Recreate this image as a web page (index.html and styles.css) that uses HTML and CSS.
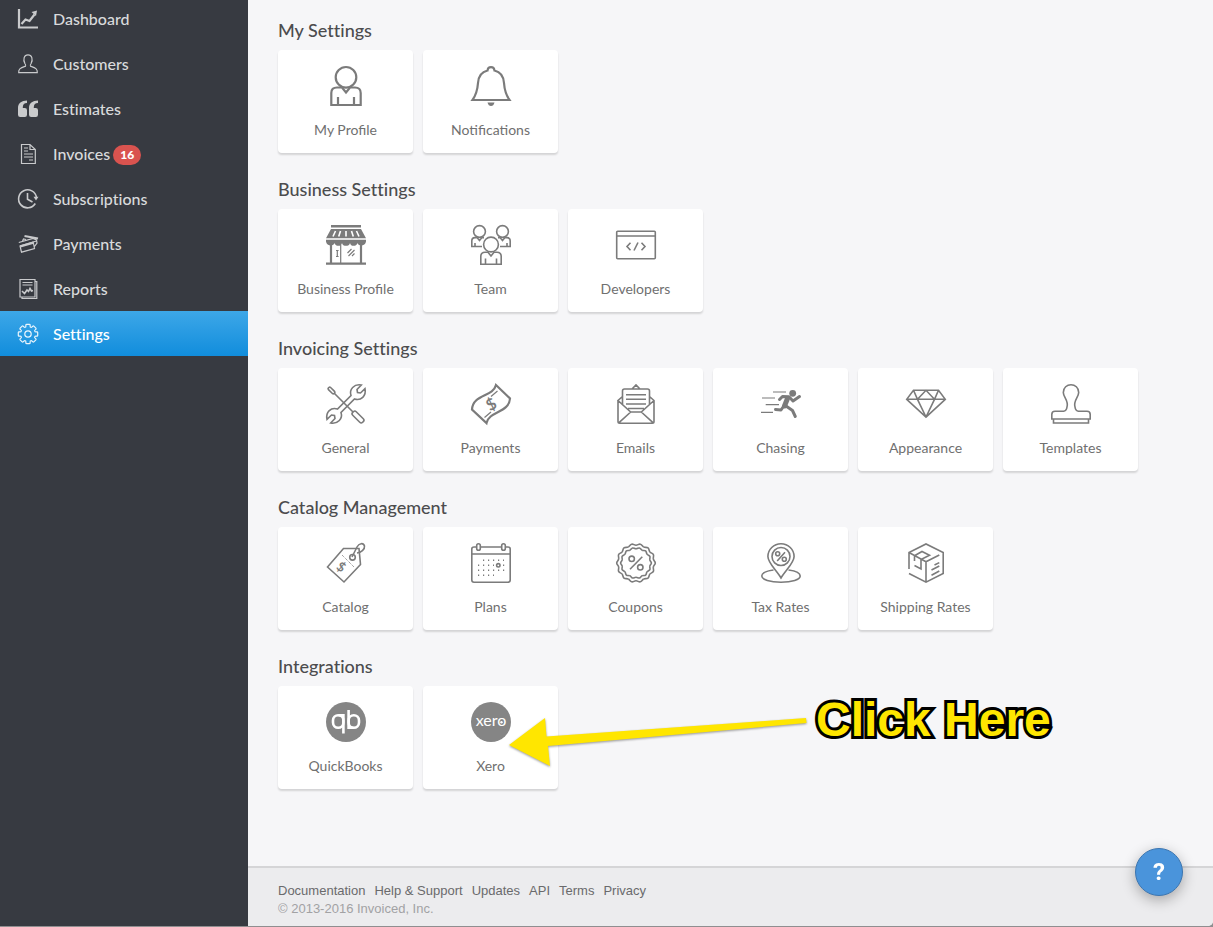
FILE: index.html
```html
<!DOCTYPE html>
<html lang="en">
<head>
<meta charset="utf-8">
<meta name="viewport" content="width=device-width, initial-scale=1">
<title>Settings</title>
<link rel="stylesheet" href="styles.css">
</head>
<body>
<div class="app">
  <nav class="sidebar" aria-label="Main">
    <a class="nav-item" href="#"><svg class="nav-icon" viewBox="0 0 20 20"><path class="w2" d="M1 0V18.500H20"/><path class="w2" d="M3.500 15L7.500 10.500L11.500 12L16.500 5.500"/><path class="solid" d="M13.500 3L19 1.500L18 7Z"/></svg>Dashboard</a>
    <a class="nav-item" href="#"><svg class="nav-icon" viewBox="0 0 20 20"><path d="M.7 18.700C.3 14.500 3 13.800 7.600 12.200C8.200 11.700 7.600 10.600 6.900 9.500C4.800 5.500 6 .8 10 .8S15.200 5.500 13.100 9.500C12.400 10.600 11.800 11.700 12.400 12.200C17 13.800 19.700 14.500 19.300 18.700Z"/></svg>Customers</a>
    <a class="nav-item" href="#"><svg class="nav-icon" viewBox="0 0 20 20"><path class="solid" d="M9 1.500V4C6.300 4 4.800 5.500 4.800 8.300V9H6.800Q9 9 9 11.200V15.800Q9 18 6.800 18H2.200Q0 18 0 15.800V8.800C0 4.500 3.500 1.500 9 1.500ZM20 1.500V4C17.300 4 15.800 5.500 15.800 8.300V9H17.800Q20 9 20 11.200V15.800Q20 18 17.800 18H13.200Q11 18 11 15.800V8.800C11 4.500 14.500 1.500 20 1.500Z"/></svg>Estimates</a>
    <a class="nav-item" href="#"><svg class="nav-icon" viewBox="0 0 20 20"><path d="M3.500 .5H12L17.300 5.500V19.500H3.500ZM12 .5V5.500H17.300M6 4H10M6 7H10M6 10H15M6 13H15M11 16H15"/></svg>Invoices<span class="badge">16</span></a>
    <a class="nav-item" href="#"><svg class="nav-icon" viewBox="0 0 20 20"><path class="w15" d="M18.500 8.500A9 9 0 1 0 17.300 14.500M9.500 4V10.200L14.500 13"/><path class="solid" d="M15.500 7.800H20.500L18 11.500Z"/></svg>Subscriptions</a>
    <a class="nav-item" href="#"><svg class="nav-icon" viewBox="0 0 20 20"><path class="w2" d="M6.500 2L20 4.500"/><path d="M.8 8.500L15 4.500L18.500 6L19 9L16.500 12.500M4.500 7L5.500 5L8 5.500M2 12L15.200 8L16.500 14.500L3.500 18.200ZM12 9L18.500 7"/><path class="w2" d="M2.300 12.400L15.500 8.600"/></svg>Payments</a>
    <a class="nav-item" href="#"><svg class="nav-icon" viewBox="0 0 20 20"><path d="M2 .5H17V18H2ZM17 2.500H18.800V19.500H4V18M4.500 3.500H14.500M4.500 6H14.500"/><path class="w15" d="M4 12L6.500 14.500L9 11L10.500 12.500L12 9.500L13.500 12L15 11.500"/></svg>Reports</a>
    <a class="nav-item active" href="#" aria-current="page"><svg class="nav-icon" viewBox="0 0 20 20"><defs><path id="tooth" d="M6.600 -2.730C7.300 -1.300 9.600 -3 9.700 -1.400V1.400C9.600 3 7.300 1.300 6.600 2.730"/></defs><g transform="translate(10 10)"><use href="#tooth"/><use href="#tooth" transform="rotate(45)"/><use href="#tooth" transform="rotate(90)"/><use href="#tooth" transform="rotate(135)"/><use href="#tooth" transform="rotate(180)"/><use href="#tooth" transform="rotate(225)"/><use href="#tooth" transform="rotate(270)"/><use href="#tooth" transform="rotate(315)"/><circle r="3.200"/></g></svg>Settings</a>
  </nav>

  <div class="page">
    <main class="content">
      <section class="group">
        <h2>My Settings</h2>
        <div class="cards">
          <a class="card" href="#"><svg class="icon w2" viewBox="0 0 40 40"><circle cx="20" cy="11.300" r="10.300"/><path d="M16 21.500H11Q5.300 21.500 5.300 27V39H34.700V27Q34.700 21.500 29 21.500H24L20 26.500ZM12 31V39M28 31V39"/></svg>My Profile</a>
          <a class="card" href="#"><svg class="icon w2" viewBox="0 0 40 40"><path d="M1.500 34C5 29 6.500 24 7 17C7.500 10 10 6 16.500 4.500C17 0 23 0 23.500 4.500C30 6 32.500 10 33 17C33.500 24 35 29 38.500 34Z"/><path class="solid" d="M16.500 36.500H23.500Q22.500 40 20 40T16.500 36.500Z"/></svg>Notifications</a>
        </div>
      </section>

      <section class="group">
        <h2>Business Settings</h2>
        <div class="cards">
          <a class="card" href="#"><svg class="icon" viewBox="0 0 40 40"><path class="solid" d="M5 0H35V2.500H5ZM5 4H35L40 13.300H0ZM0 14.700H40V16.500C39.500 21.500 32 21.500 31.500 18C30.500 21.800 24.500 21.800 24 18C23.500 21.800 16.500 21.800 16 18C15.500 21.800 9.500 21.800 8.500 18C8 21.500 .5 21.500 0 16.500Z"/><path class="white w15" d="M9.500 6L7 11.500M14.500 6L12.700 11.500M20 6V11.500M25.500 6L27.300 11.500M30.500 6L33 11.500"/><path class="w2" d="M5 19V38M35 19V38M0 38.700H40"/><path d="M14.700 20V38M11.300 25.500V31.500M10 25.500H12.600M10 31.500H12.600M21.500 28L25.500 24M22.500 31L28.500 25M26 31L28.500 28.500"/></svg>Business Profile</a>
          <a class="card" href="#"><svg class="icon w15" viewBox="0 0 40 40"><circle cx="8.500" cy="6.500" r="5.900"/><circle cx="31.500" cy="6.500" r="5.900"/><circle cx="20" cy="19.500" r="7.400"/><path d="M6 12.600H4Q.8 12.600 .8 16V21.500H11M6 12.600L8.500 15.500L11 12.600H13M4 18V21.500M34 12.600H36Q39.200 12.600 39.200 16V21.500H29M34 12.600L31.500 15.500L29 12.600H27M36 18V21.500M17 27.300H14Q9.800 27.300 9.800 31.500V39.200H30.200V31.500Q30.200 27.300 26 27.300H23L20 31ZM14.500 33.500V39M25.500 33.500V39"/></svg>Team</a>
          <a class="card" href="#"><svg class="icon" viewBox="0 0 40 40"><rect class="w15" x=".7" y="6.200" width="38.600" height="27.600" rx="1"/><path class="w15" d="M1 11H39M14.500 17.800L11 21.500L14.500 25.200M22 17.500L18 25.500M25.500 17.800L29 21.500L25.500 25.200"/></svg>Developers</a>
        </div>
      </section>

      <section class="group">
        <h2>Invoicing Settings</h2>
        <div class="cards">
          <a class="card" href="#"><svg class="icon w15" viewBox="0 0 40 40"><path d="M25 11.500C23 5.500 28 -.3 35.300 1L31 5.500L31.500 8.500L34.500 9L39 4.700C40.500 12 35 17 28.500 15L15 28.500C17 34.500 12 40.300 4.700 39L9 34.500L8.500 31.500L5.500 31L1 35.300C-.5 28 5 23 11.500 25Z"/><path d="M8.500 9.500L18 19M18 19L27 28"/><rect x="-1.500" y="-4" width="3" height="8" rx="1.200" transform="translate(5.500 6.500) rotate(-45)"/><rect x="-2.500" y="-7" width="5" height="14" rx="2" transform="translate(32 33) rotate(-45)"/></svg>General</a>
          <a class="card" href="#"><svg class="icon w2" viewBox="0 0 40 40"><path d="M25 1C22 13 2 10 1 25.500L15.500 39C18 27 38 29 39 14.500Z"/><path class="w1" d="M20 12.500L26.500 7M13.500 33.500L20 28"/><text class="glyph big" x="0" y="6" transform="translate(20 20) rotate(-30)">$</text></svg>Payments</a>
          <a class="card" href="#"><svg class="icon w15" viewBox="0 0 40 40"><path d="M6.500 20.500V7Q6.500 5 8.500 5H31.500Q33.500 5 33.500 7V20.500M16 5L20 1L24 5M2 16.500V37.500Q2 39.200 3.700 39.200H36.300Q38 39.200 38 37.500V16.500L33.500 12.500M6.500 12.500L2 16.500L14.700 28H25.300L38 16.500M14.700 28L3 38.700M25.300 28L37 38.700M12 24.500H28M10 10.700H30M10 15.300H30M10 20H30"/></svg>Emails</a>
          <a class="card" href="#"><svg class="icon" viewBox="0 0 40 40"><path d="M12 8H25M1 14H14M4.700 20.700H18M0 28.300H12"/><circle class="solid" cx="31.700" cy="9.300" r="3.400"/><path class="runner" d="M18.500 15.500L21.500 12.500L28 12.800L32 17L38.500 12.500M14.500 25.500L20 26L23.500 21M25 22L31.500 26.500L34.300 32.500"/><path class="torso" d="M26.500 14.500L23.500 22"/></svg>Chasing</a>
          <a class="card" href="#"><svg class="icon w15" viewBox="0 0 40 40"><path d="M7.500 6.300H32.500L39.300 15.300L20 33.200L.7 15.300ZM.7 15.300H39.300M7.500 6.300L11.500 15.300L20 33M32.500 6.300L28.500 15.300L20 33M11.500 15.300L20 6.300L28.500 15.300"/></svg>Appearance</a>
          <a class="card" href="#"><svg class="icon w15" viewBox="0 0 40 40"><path d="M16 23C18 17 12.300 13 12.300 8.500C12.300 3.500 16 .8 20 .8S27.700 3.500 27.700 8.500C27.700 13 22 17 24 23Q24.500 27 27.500 27.300H36Q39.200 27.300 39.200 30.500V35H.8V30.500Q.8 27.300 4 27.300H12.500Q15.500 27 16 23ZM2.500 35H37.500V39H2.500Z"/></svg>Templates</a>
        </div>
      </section>

      <section class="group">
        <h2>Catalog Management</h2>
        <div class="cards">
          <a class="card" href="#"><svg class="icon w15" viewBox="0 0 40 40"><path d="M1.500 24L17.500 5.500H33L34.500 21.500L18 39Z"/><circle cx="26.500" cy="14.300" r="2.800"/><path d="M26 14L31 4C33 0 37.500 -.5 38.500 3C39 6.500 35 9.500 31 10"/><path class="dotted" d="M16 12L28 24"/><text class="glyph" x="0" y="4" transform="translate(15 24.500) rotate(35)">$</text></svg>Catalog</a>
          <a class="card" href="#"><svg class="icon w15" viewBox="0 0 40 40"><path d="M5.500 4H3Q.8 4 .8 6V37Q.8 39.200 3 39.200H37Q39.200 39.200 39.200 37V6Q39.200 4 37 4H34.500M9.500 4H30.500M1 11H39"/><rect x="5.700" y=".7" width="3.600" height="6.600" rx="1.800"/><rect x="30.700" y=".7" width="3.600" height="6.600" rx="1.800"/><path class="dots" d="M12 17.300H33"/><path class="dots" d="M7 22.300H23M32 22.300H33.200"/><path class="dots" d="M7 27.300H33.200"/><path class="dots" d="M7 32.300H23"/><circle cx="27.300" cy="22.300" r="1.700"/></svg>Plans</a>
          <a class="card" href="#"><svg class="icon w15" viewBox="0 0 40 40"><defs><g id="lobe"><path d="M17.350 -3.960C17.700 -2.300 19.300 -1.600 19.300 0C19.300 1.600 17.700 2.300 17.350 3.960"/><path d="M13.840 -3.160C14.100 -1.800 15.400 -1.200 15.400 0C15.400 1.200 14.100 1.800 13.840 3.160"/></g><g id="half"><use href="#lobe"/><use href="#lobe" transform="rotate(25.714)"/><use href="#lobe" transform="rotate(51.429)"/><use href="#lobe" transform="rotate(77.143)"/><use href="#lobe" transform="rotate(102.857)"/><use href="#lobe" transform="rotate(128.571)"/><use href="#lobe" transform="rotate(154.286)"/></g></defs><g transform="translate(20 20)"><use href="#half"/><use href="#half" transform="rotate(180)"/></g><circle cx="15.700" cy="15.800" r="2.700"/><circle cx="24.300" cy="24.300" r="2.700"/><path d="M26.300 13.800L14 26.300"/></svg>Coupons</a>
          <a class="card" href="#"><svg class="icon w15" viewBox="0 0 40 40"><path d="M20 35C16 28 6.900 20 6.900 13.500A13.100 12.800 0 0 1 33.100 13.500C33.100 20 24 28 20 35Z"/><circle cx="20" cy="13.500" r="9"/><circle cx="16.700" cy="10.700" r="2"/><circle cx="23.300" cy="16.300" r="2"/><path d="M24 9.300L16.200 18M12.500 27C5 28 .8 30.300 .8 33C.8 36.600 9 39.200 20 39.200S39.200 36.600 39.200 33C39.200 30.300 35 28 27.500 27"/></svg>Tax Rates</a>
          <a class="card" href="#"><svg class="icon w15" viewBox="0 0 40 40"><path d="M3 26V9.500L20 1L37.200 9.500V30.500L20 39.200L3 30.500M3 9.500L20 18.700V39M20 18.700L33.300 12M8.500 12.700V18M8.500 12.700L16 8.500L23.500 12.200L15 16.500V26L8.500 22.500M28.500 22L33.300 19.600M25.500 27L33.300 23M25.500 32.200L33.300 28"/></svg>Shipping Rates</a>
        </div>
      </section>

      <section class="group">
        <h2>Integrations</h2>
        <div class="cards">
          <a class="card" href="#"><svg class="icon" viewBox="0 0 40 40"><circle class="disc" cx="20" cy="20" r="20"/><g class="white bowl"><rect x="7" y="13.200" width="10.400" height="12.600" rx="5.200"/><rect x="22.600" y="13.200" width="10.400" height="12.600" rx="5.200"/></g><path class="white bowl" d="M12.500 13.200H17.400V31.500M27.500 25.800H22.600V8"/></svg>QuickBooks</a>
          <div class="target">
            <a class="card" href="#"><svg class="icon" viewBox="0 0 40 40"><circle class="disc" cx="20" cy="20" r="20"/><text class="wordmark" x="20" y="24">xero</text><circle class="hub" cx="30.500" cy="20.300" r="1.200"/></svg>Xero</a>
            <svg class="arrow" viewBox="0 0 300 52" aria-hidden="true"><path d="M0 29L36 2L37.500 20.500L297 2L297.500 7L39 30L41 50Z"/></svg>
            <strong class="callout">Click Here</strong>
          </div>
        </div>
      </section>
    </main>

    <footer class="footer">
      <div class="links"><a href="#">Documentation</a><a href="#">Help &amp; Support</a><a href="#">Updates</a><a href="#">API</a><a href="#">Terms</a><a href="#">Privacy</a></div>
      <div class="copyright">© 2013-2016 Invoiced, Inc.</div>
    </footer>
  </div>
</div>
<button class="help" type="button" aria-label="Help">?</button>
</body>
</html>
```
FILE: styles.css
```css
* { box-sizing: border-box; }
body { margin: 0; padding-bottom: 1px; font-family: Lato, "Open Sans", sans-serif; background: #8f8e90; }
a { color: inherit; text-decoration: none; }

.app { display: flex; min-height: calc(100vh - 1px); overflow: hidden; border-radius: 0 0 5px 0; background: #f6f6f8; }
.sidebar { flex: 0 0 248px; margin-top: -4px; background: #373a41; }
.nav-item { display: flex; align-items: center; height: 45px; padding: 0 18px; color: #d9dadc; font-size: 16px; font-weight: 500; line-height: 20px; font-variant-ligatures: none; }
.nav-item.active { color: #fff; background: linear-gradient(#3da7e8, #118ddc); }
.nav-icon { width: 20px; height: 20px; margin-right: 15px; fill: none; stroke: currentColor; stroke-width: 1.2; overflow: visible; opacity: .9; }
.badge { margin: 2px 0 0 3px; padding: 0 7px; border-radius: 10px; background: #d9534f; color: #fff; font-size: 12px; font-weight: 900; line-height: 20px; }

.page { flex: 1; min-width: 0; display: flex; flex-direction: column; }
.content { flex: 1; padding: 20px 30px; }
.group { margin-bottom: 26px; }
h2 { margin: 0 0 10px; color: #4c4c4e; font-size: 18px; font-weight: 500; line-height: 20px; font-variant-ligatures: none; }
.cards { display: flex; flex-wrap: wrap; gap: 10px; }
.card { display: flex; flex-direction: column; align-items: center; gap: 14px; width: 135px; padding: 16px 0 13px; border-radius: 4px; background: #fff; box-shadow: 0 2px 2px rgba(0, 0, 0, .14); color: #707070; font-size: 14px; line-height: 20px; }
.icon { width: 40px; height: 40px; margin-left: 1px; fill: none; stroke: #7b7b7b; stroke-width: 1.2; overflow: visible; }
.w1 { stroke-width: 1.2; }
.w15 { stroke-width: 1.6; }
.w2 { stroke-width: 2.2; }
.solid { fill: #7b7b7b; stroke: none; }
.nav-icon .solid { fill: currentColor; }
.white { stroke: #fff; }
.bowl { stroke-width: 2.6; }
.disc { fill: #858585; stroke: none; }
.hub { fill: #fff; stroke: none; }
.runner { stroke-width: 3; stroke-linecap: round; stroke-linejoin: round; }
.torso { stroke-width: 5; stroke-linecap: round; }
.dots { stroke-width: 1.4; stroke-dasharray: 1.2 3.8; }
.dotted { stroke-width: 1; stroke-dasharray: 1 1; }
.glyph { fill: #7b7b7b; stroke: none; font: 700 13px Lato, sans-serif; text-anchor: middle; }
.glyph.big { font-size: 16px; }
.wordmark { fill: #fff; stroke: none; font: 16px Lato, sans-serif; text-anchor: middle; }

.target { position: relative; }
.arrow { position: absolute; left: 86px; top: 30px; width: 300px; height: 52px; fill: #ffe600; filter: drop-shadow(0 1px 1px rgba(0, 0, 0, .4)); pointer-events: none; }
.callout { position: absolute; left: 393px; top: 6px; color: #ffe600; font: 700 48px/56px "Liberation Sans", Arial, sans-serif; white-space: nowrap; -webkit-text-stroke: 6px #000; paint-order: stroke fill; pointer-events: none; }

.footer { padding: 14px 30px 8px; border-top: 2px solid #d5d5d7; background: #ececee; font: 13px/18px "Liberation Sans", Arial, sans-serif; }
.links { display: flex; flex-wrap: wrap; gap: 9px; color: #6a6a6c; }
.copyright { color: #a2a2a4; }
.help { position: fixed; right: 30px; bottom: 31px; width: 48px; height: 48px; border: 1px solid #3b75b0; border-radius: 50%; background: #4a94db; color: #fff; font: 700 24px/46px Roboto, sans-serif; padding: 0; box-shadow: 0 4px 14px rgba(0, 0, 0, .3); }
```
